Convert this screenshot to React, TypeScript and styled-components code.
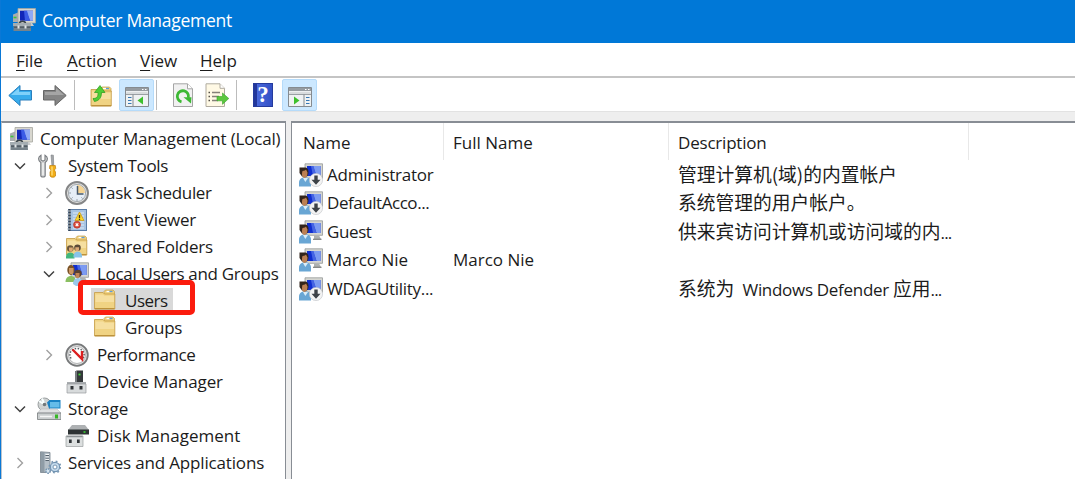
import React from "react";
import styled, { createGlobalStyle } from "styled-components";

const GlobalStyle = createGlobalStyle`
  * { box-sizing: border-box; }
  body { margin: 0; background: #fff; overflow: hidden; }
`;

const Window = styled.div`
  display: flex;
  flex-direction: column;
  width: 1075px;
  height: 479px;
  background: #eee;
  border-left: 1px solid #0a78d6;
  font-family: "Open Sans", "Noto Sans CJK SC", sans-serif;
  font-size: 17px;
  color: #1b1b1b;
  overflow: hidden;
`;
const TitleBar = styled.header`
  display: flex;
  align-items: center;
  gap: 6px;
  height: 43px;
  margin-left: -1px;
  padding: 0 0 3px 12px;
  background: #0078d7;
  color: #fff;
`;
const MenuBar = styled.nav`
  display: flex;
  align-items: center;
  height: 33px;
  padding: 3px 0 0 15px;
  background: #fff;
`;
const MenuItem = styled.span<{ $w: number }>`
  width: ${(p) => p.$w}px;
  white-space: nowrap;
`;
const Mnemonic = styled.span`
  text-decoration: underline;
  text-decoration-thickness: 1px;
  text-underline-offset: 3px;
`;
const ToolBar = styled.div`
  display: flex;
  align-items: center;
  height: 36px;
  padding-left: 6px;
  background: #fff;
  border-top: 2px solid #c4c4c4;
  border-bottom: 1px solid #e2e2e2;
`;
const ToolButton = styled.button<{ $active?: boolean; $gap?: number }>`
  display: grid;
  place-items: center;
  flex: none;
  width: ${(p) => (p.$active ? 35 : 34)}px;
  height: 32px;
  margin: 0 0 0 ${(p) => p.$gap ?? 0}px;
  padding: ${(p) => (p.$active ? "4px 0 0" : "0")};
  border: 1px solid ${(p) => (p.$active ? "#b5dbfa" : "transparent")};
  border-radius: 2px;
  background: ${(p) => (p.$active ? "#cce8ff" : "transparent")};
`;
const ToolDivider = styled.i<{ $gap: number }>`
  flex: none;
  width: 1px;
  height: 30px;
  margin-left: ${(p) => p.$gap}px;
  background: #bcbcbc;
`;
const Body = styled.main`
  display: flex;
  gap: 5px;
  flex: 1;
  min-height: 0;
  padding-top: 9px;
`;
const TreePane = styled.aside`
  width: 285px;
  padding: 2px 0 0 7px;
  background: #fff;
  border: 1px solid #888d94;
  border-top-width: 2px;
  border-left-color: #bcc4cc;
  border-bottom: 0;
`;
const ListPane = styled.section`
  flex: 1;
  background: #fff;
  border: 1px solid #888d94;
  border-top-width: 2px;
  border-right: 0;
  border-bottom: 0;
`;
const TreeRow = styled.div<{ $indent: number }>`
  position: relative;
  display: flex;
  align-items: center;
  height: 27px;
  padding-left: ${(p) => p.$indent}px;
`;
const ChevronSlot = styled.span<{ $w: number }>`
  display: flex;
  flex: none;
  width: ${(p) => p.$w}px;
`;
const Item = styled.span<{ $selected?: boolean; $gap: number }>`
  display: flex;
  flex: none;
  align-items: center;
  gap: ${(p) => p.$gap}px;
  height: 26px;
  margin-left: -2px;
  padding: 0 5px 0 2px;
  background: ${(p) => (p.$selected ? "#d9d9d9" : "transparent")};
`;
const Highlight = styled.span`
  position: absolute;
  z-index: 1;
  left: 69px;
  top: -7px;
  width: 117px;
  height: 35px;
  border: 5px solid #fb1c0e;
  border-radius: 5px;
`;
const Text = styled.span<{ $ls?: number; $size?: number }>`
  letter-spacing: ${(p) => p.$ls ?? 0}px;
  font-size: ${(p) => p.$size ?? 17}px;
  line-height: 24px;
  white-space: pre;
`;
const Cjk = styled.span`
  font-family: "Noto Sans CJK SC", sans-serif;
  font-size: 18.75px;
  line-height: 24px;
  letter-spacing: 0;
`;
const HeaderRow = styled.div`
  display: grid;
  grid-template-columns: 152px 225px 300px;
  height: 37px;
  margin-bottom: 0.5px;
`;
const HeaderCell = styled.div`
  display: flex;
  align-items: center;
  padding: 3px 0 0 9px;
  border-right: 1px solid #e8e8e8;

  &:first-child {
    padding-left: 11px;
  }
`;
const UserRow = styled.div`
  display: grid;
  grid-template-columns: 152px 225px 300px;
  align-items: center;
  height: 28.5px;
`;
const NameCell = styled.div`
  display: flex;
  align-items: center;
  gap: 4px;
  padding-left: 7px;
`;
const Cell = styled.div`
  display: flex;
  align-items: center;
  padding-left: 9px;
`;

const Svg = ({ size = 24, children }: { size?: number; children: React.ReactNode }) => (
  <svg width={size} height={size} viewBox="0 0 24 24" fill="none">{children}</svg>
);

const Chevron = ({ open }: { open?: boolean }) => (
  <svg width="12" height="12" viewBox="0 0 12 12" fill="none">
    {open ? <path d="M1 3.5 6 8.5 11 3.5" stroke="#404040" strokeWidth="1.5" /> : <path d="M3.5 1 8.5 6 3.5 11" stroke="#a0a0a0" strokeWidth="1.4" />}
  </svg>
);

const ComputerIcon = () => (
  <Svg>
    <path d="M1 6.5 6 4.5V14H1z" fill="#a9adb0" />
    <path d="M1.5 9.5h3" stroke="#3fc43a" strokeWidth="1.6" />
    <path d="M6 .5h17.500v14.500H6z" fill="#d8d7cf" stroke="#a6a69f" strokeWidth=".8" />
    <path d="M8 2.7h13v10H8z" fill="#1226b8" />
    <path d="M14 2.7h7v10h-3z" fill="#8fa9f5" />
    <path d="M12 2.7h3l3 10h-5z" fill="#3b5be6" />
    <path d="M11 15h9l2 3h-9z" fill="#c9cbcc" />
    <path d="M7.500 15.500c0-3 6-3 6 0" stroke="#39434b" strokeWidth="1.500" />
    <path d="M1.500 15.500h17L19 23H1.500z" fill="#77838b" />
    <path d="M1 15h18v3H1z" fill="#a4adb2" />
    <path d="M2 19.200h16.500" stroke="#4a555d" strokeWidth="1.200" />
    <path d="M5.500 17.500h2v3h-2zM12.500 17.500h2v3h-2z" fill="#e1e5e7" />
  </Svg>
);

const ToolsIcon = () => (
  <Svg>
    <path d="M4 1.200C.8 3 .8 6.500 3.800 8.500V21.500c0 2 4.400 2 4.400 0V8.500c3-2 3-5.500-.2-7.300V6L6 7.200 4 6z" fill="#d3d4d5" stroke="#777b7f" strokeWidth="1.100" />
    <path d="M6 9v12" stroke="#f8f8f8" strokeWidth="1.200" />
    <path d="m14 1 2.400.2.300 10h-1.800z" fill="#a2a5a9" stroke="#7c7f83" strokeWidth=".6" />
    <path d="M12.800 11.500h5.500l.4 3-1.300 1.500 1.100 2v4c-1 1.700-4.500 1.700-5.500 0v-4l1.200-2-1.700-1.500z" fill="#f2ad16" stroke="#bf7e09" strokeWidth=".7" />
    <path d="M15 12.500v9" stroke="#ffe486" strokeWidth="1.200" />
  </Svg>
);

const ClockIcon = () => (
  <Svg>
    <circle cx="12" cy="12" r="11" fill="#e0e0df" stroke="#858687" strokeWidth="1.900" />
    <circle cx="12" cy="12" r="8.600" fill="#e6eef7" stroke="#a6acb0" />
    <path d="M12 12V4a8 8 0 0 1 8 8z" fill="#f6d493" />
    <path d="M12.500 5v8h6" stroke="#47596c" strokeWidth="1.500" />
    <path d="M12 18.300v1.500M4.300 12h1.500M6.500 6.500l1 1M6.500 17.500l1-1M17.500 17.500l-1-1" stroke="#7c8791" />
  </Svg>
);

const EventIcon = () => (
  <Svg>
    <path d="M3 1h19v22H3z" fill="#5a7ca6" />
    <path d="M6 2h15v20H6z" fill="#a7c4e3" />
    <path d="M8 5h11M8 8h11M8 11h11M8 14h11M8 17h11M8 20h11" stroke="#dfeaf6" />
    <path d="M4.500 1v22" stroke="#38434e" strokeWidth="2" />
    <path d="M2 3h4M2 6h4M2 9h4M2 12h4M2 15h4M2 18h4M2 21h4" stroke="#bfc7cd" strokeWidth="1.200" />
    <path d="m14.500 4 4.500 8.500h-9z" fill="#f9d62d" stroke="#d19a13" strokeWidth=".8" />
    <path d="M14.500 7v3M14.500 10.700v1.200" stroke="#413413" strokeWidth="1.300" />
    <circle cx="12" cy="16.700" r="3.500" fill="#d94c3b" stroke="#a8291d" strokeWidth=".6" />
    <path d="m10.700 15.400 2.600 2.600m0-2.600-2.600 2.600" stroke="#fff" strokeWidth="1.200" />
  </Svg>
);

const FolderShape = () => (
  <>
    <path d="M11 3.500 12.500 2H20l1.500 1.500V7H11z" fill="#efcf7a" stroke="#c39d47" strokeWidth=".7" />
    <path d="M13.500 3.500h3" stroke="#fff" strokeWidth="1.300" />
    <path d="M16.500 3.500h3" stroke="#5d9cdc" strokeWidth="1.300" />
    <path d="M1.500 4.500H10l1.500 1.500h10.300V21H1.500z" fill="#f0d383" stroke="#c49b45" strokeWidth=".8" />
    <path d="M2.500 6.500h7.500l1.500 1.300H21V14H2.500z" fill="#f6dfa0" />
    <path d="M2 20.700h19.500" stroke="#b88c34" strokeWidth="1.100" />
  </>
);
const FolderIcon = () => <Svg><g transform="translate(0 -1)"><FolderShape /></g></Svg>;

const SharedIcon = () => (
  <Svg>
    <g transform="translate(0 -1)"><FolderShape /></g>
    <path d="M1 22c0-6 8.500-6 8.500 0v1.500H1z" fill="#42b67c" />
    <circle cx="5.300" cy="13.500" r="3.300" fill="#6b573c" />
    <path d="M4 12.500h3.800v2c0 3-3.800 3-3.800 0z" fill="#dba874" />
    <path d="M8.500 21c0-6 8.500-6 8.500 0v1.500H8.500z" fill="#88c4e9" />
    <circle cx="12.500" cy="12.800" r="3.300" fill="#5b4937" />
    <path d="M10.300 12.300h3.700v2c0 2.700-3.700 2.700-3.700 0z" fill="#dba874" />
  </Svg>
);

const MonitorShape = () => (
  <>
    <path d="M6 .8h17.500v14.500H6z" fill="#d5d6d2" stroke="#969997" strokeWidth=".8" />
    <path d="M8 3h13.500v10H8z" fill="#102fd0" />
    <path d="M14 3h7.500v10h-4z" fill="#7c9bf1" />
    <path d="M12 3h2.500l3 10H14z" fill="#4564e3" />
    <path d="M15 15.500h5l2 3.500h-7z" fill="#aeb1b0" />
    <path d="M14 19.300h8.500" stroke="#7b7e7d" strokeWidth="1.200" />
  </>
);
const GroupIcon = () => (
  <Svg>
    <MonitorShape />
    <path d="M.5 20c0-8 10.500-8 10.500 0H.5z" fill="#8abf61" />
    <ellipse cx="6" cy="8" rx="3.700" ry="5" fill="#7a5226" />
    <path d="M4 6h4.500v4c0 3-4.500 3-4.500 0z" fill="#cc9663" />
    <path d="M8 22c0-8 10-8 10 0l-3 2h-4z" fill="#9bc9ec" />
    <circle cx="13" cy="11.500" r="3.700" fill="#5a4030" />
    <path d="M10.500 11h4v3c0 3-4 3-4 0z" fill="#c28455" />
  </Svg>
);
const UserIcon = ({ disabled }: { disabled?: boolean }) => (
  <Svg>
    <MonitorShape />
    <path d="M0 23.500v-4c0-7 12-7 12 0v4z" fill="#69a6d4" />
    <path d="m4 15 2.300 4L9 15z" fill="#d9edf9" />
    <path d="M.5 4.500h6c4 1 3.500 7 1.500 9H3L.5 10z" fill="#33251c" />
    <path d="M3.500 8c2 0 3-1 3.500-1.500l1.500 3c0 3-1 5.500-3 5.500-2.500 0-3-4-2-7z" fill="#bc8053" />
    {disabled && (
      <>
        <circle cx="17" cy="17" r="6.600" fill="#f3f3f3" stroke="#bfc3c7" strokeWidth=".6" />
        <path d="M15.300 12.500h3.400v4.200h2.800L17 21.700l-4.500-5h2.800z" fill="#3d4247" />
      </>
    )}
  </Svg>
);

const GaugeIcon = () => (
  <Svg>
    <circle cx="12" cy="12" r="10.800" fill="#e1e2e2" stroke="#77797a" strokeWidth="1.800" />
    <circle cx="12" cy="12" r="8.500" fill="#fff" stroke="#b5b6b7" />
    <path d="M6 15.500C2.500 9 8 5.500 12 5.500s9.500 3.500 6 10" stroke="#585d61" strokeWidth="1.500" strokeDasharray="1.500 1.500" />
    <path d="m7.500 6.500 9.500 9.500V8" stroke="#db2020" strokeWidth="2.400" />
  </Svg>
);

const DeviceIcon = () => (
  <Svg>
    <path d="M10 1.500 12 .5h6v13h-8z" fill="#34383a" />
    <path d="M10 1.500 12 .5V13h-2z" fill="#777c7f" />
    <path d="M13.500 4.500h2" stroke="#42dd38" strokeWidth="1.800" />
    <path d="M2 12h19v2.500H2z" fill="#a9adb0" />
    <path d="M2 14h19v9H2z" fill="#d8dbdc" stroke="#989b9d" strokeWidth=".7" />
    <path d="M5.500 16h3v3.500h-3zM14.500 16h3v3.500h-3z" fill="#303437" />
  </Svg>
);

const StorageIcon = () => (
  <Svg>
    <circle cx="7.500" cy="7.500" r="6.500" fill="#cfd2d2" stroke="#999e9f" />
    <path d="M7.500 7.500 2 4m5.500 3.500L5 1.500" stroke="#f8ffff" strokeWidth="2" />
    <circle cx="7.500" cy="7.500" r="1.800" fill="#70777a" />
    <path d="M10 5.500 12.500 3h11v8.500H12z" fill="#1982c4" />
    <path d="M13 5h9.500v5.500H13z" fill="#65bce9" />
    <path d="M4 12h16l4 4H.5z" fill="#dfe1e2" stroke="#b0b3b4" strokeWidth=".5" />
    <path d="M.5 16H24v6.500H.5z" fill="#c9cdce" stroke="#777c7e" strokeWidth=".8" />
    <path d="M3 19.500h12" stroke="#f4f5f5" strokeWidth="1.500" />
    <path d="M18 17.500h3v4h-3z" fill="#36b726" />
  </Svg>
);

const DiskIcon = () => (
  <Svg>
    <path d="M7 1h13l4 5H3z" fill="#aeb1b3" />
    <path d="M3 5.500h21v5H3z" fill="#2d3233" />
    <path d="M18.500 8h2" stroke="#3ddd33" strokeWidth="1.500" />
    <path d="M1 12h17v10.500H1z" fill="#dcdfdf" stroke="#999d9f" strokeWidth=".7" />
    <path d="M1.500 12.500h16" stroke="#8d9294" strokeWidth="1.500" />
    <path d="M4 15.500h2.700V19H4zM12 15.500h2.700V19H12z" fill="#303437" />
  </Svg>
);

const ServicesIcon = () => (
  <Svg>
    <path d="M3.500.8 13 1.500v20H3.500z" fill="#b5bfc7" stroke="#75808a" strokeWidth=".8" />
    <path d="M4 1h3.500v20H4z" fill="#8f9ca6" />
    <path d="M8.500 4.500H12M8.500 7H12M8.500 9.500H12" stroke="#55616c" strokeWidth="1.100" />
    <path d="M8.500 3.500H12M8.500 6H12M8.500 8.500H12" stroke="#f5f7f8" />
    <circle cx="18" cy="16" r="4.600" fill="#c5dbed" stroke="#7293b1" strokeWidth="1.100" />
    <circle cx="18" cy="16" r="5.600" stroke="#7897b3" strokeWidth="1.800" strokeDasharray="1.800 2.600" />
    <circle cx="18" cy="16" r="2" fill="#fff" stroke="#7897b3" />
    <circle cx="11" cy="20" r="2.200" fill="#d7e6f1" stroke="#7897b3" strokeWidth="1.500" strokeDasharray="1.500 .8" />
  </Svg>
);

const Arrow = ({ back }: { back?: boolean }) => (
  <Svg>
    <path
      d={back ? "M.8 12.500 12 2.500v5h11.500v9.500H12V22.500z" : "M23.200 12.500 12 2.500v5H.5v9.500H12v5.500z"}
      fill={back ? "#38acec" : "#858585"} stroke={back ? "#287fbd" : "#666"} strokeWidth="1" strokeLinejoin="round"
    />
    <path d={back ? "M3 12 11 5v4h11v3z" : "M21 12 13 5v4H2v3z"} fill={back ? "#7fd1fa" : "#a5a5a5"} />
  </Svg>
);

const UpFolderIcon = () => (
  <Svg>
    <g transform="translate(.5 2)"><FolderShape /></g>
    <path d="M4 15.500c5 0 5-3 5-6H5.500L11 2.500l5 7h-3.500c0 5-2 8-7 9z" fill="#4fcd35" stroke="#279b1e" strokeWidth=".7" />
  </Svg>
);

const PaneIcon = ({ right }: { right?: boolean }) => (
  <svg width="24" height="20" viewBox="0 0 24 20" fill="none">
    <path d="M.5.5h23v19H.5z" fill="#eff2f3" stroke="#858b90" />
    <path d="M1 1h22v3H1z" fill="#969ca1" />
    <path d="M1.500 5.500h21" stroke="#d9dcde" strokeWidth="1.200" />
    <path d="M1 7.300h22" stroke="#858b90" />
    <path d="M17 2.500h1.500M20 2.500h1.500" stroke="#fff" />
    {right ? (
      <>
        <path d="M16 7.500V19" stroke="#858b90" />
        <path d="M18 10.500h3.500M18 13.500h3.500M18 16.500h3.500" stroke="#3577b5" strokeWidth="1.200" />
        <path d="M6 9.500v8l5.500-4z" fill="#3dc02d" />
      </>
    ) : (
      <>
        <path d="M8 7.500V19" stroke="#858b90" />
        <path d="M3 10.500h3.500M3 13.500h3.500M3 16.500h3.500" stroke="#3577b5" strokeWidth="1.200" />
        <path d="M18 9.500v8l-5.500-4z" fill="#3dc02d" />
      </>
    )}
  </svg>
);

const RefreshIcon = () => (
  <Svg>
    <path d="M2.500.8h14l5 5V23.500h-19z" fill="#f1f1f1" stroke="#a5a5a5" />
    <path d="M16.500.8v5h5" fill="#fff" stroke="#a5a5a5" />
    <path d="M10.500 18.800a5.600 5.600 0 1 1 6.800-4" stroke="#3db834" strokeWidth="2.800" />
    <path d="M12.500 14.200h8L20 20.500z" fill="#3db834" />
  </Svg>
);

const ExportIcon = () => (
  <Svg>
    <path d="M1 .8h14l4.500 4.500V23.500H1z" fill="#fff9e5" stroke="#b0aba0" />
    <path d="M15 .8v4.500h4.500" fill="#fff" stroke="#b0aba0" />
    <path d="M7 9.500h8M7 13.500h7M7 17.500h6" stroke="#858179" strokeWidth="1.300" />
    <path d="M3.500 9.500H5M3.500 13.500H5M3.500 17.500H5" stroke="#545049" strokeWidth="1.400" />
    <path d="M12 13.500h5.500V10l6.300 5.500-6.300 5.800v-3.500H12z" fill="#5bc73e" stroke="#35a52a" strokeWidth=".6" />
  </Svg>
);

const HelpGlyph = styled.div`
  display: grid;
  place-items: center;
  width: 20px;
  height: 24px;
  background: linear-gradient(90deg, #23379b 3px, #4968db 3px, #3350c5);
  border: 1px solid #253b9d;
  color: #fff;
  font: bold 23px/22px "Liberation Serif", serif;
`;

const TREE: { text: string; level: number; icon: React.ReactNode; open?: boolean; selected?: boolean; ls?: number }[] = [
  { text: "Computer Management (Local)", level: 0, icon: <ComputerIcon />, ls: -0.17 },
  { text: "System Tools", level: 1, icon: <ToolsIcon />, open: true, ls: -0.32 },
  { text: "Task Scheduler", level: 2, icon: <ClockIcon />, open: false, ls: -0.33 },
  { text: "Event Viewer", level: 2, icon: <EventIcon />, open: false, ls: -0.25 },
  { text: "Shared Folders", level: 2, icon: <SharedIcon />, open: false, ls: -0.2 },
  { text: "Local Users and Groups", level: 2, icon: <GroupIcon />, open: true, ls: -0.3 },
  { text: "Users", level: 3, icon: <FolderIcon />, selected: true, ls: -0.5 },
  { text: "Groups", level: 3, icon: <FolderIcon />, ls: -0.2 },
  { text: "Performance", level: 2, icon: <GaugeIcon />, open: false, ls: -0.4 },
  { text: "Device Manager", level: 2, icon: <DeviceIcon />, ls: -0.08 },
  { text: "Storage", level: 1, icon: <StorageIcon />, open: true, ls: -0.1 },
  { text: "Disk Management", level: 2, icon: <DiskIcon /> },
  { text: "Services and Applications", level: 1, icon: <ServicesIcon />, open: false, ls: -0.17 },
];
const INDENT = [0, 5, 34, 84];
const SLOT = [0, 23, 22, 0];
const GAP = [7, 7, 8, 8];

const USERS: { name: string; full?: string; disabled?: boolean; desc?: React.ReactNode; ls?: number }[] = [
  { name: "Administrator", disabled: true, desc: <Cjk>管理计算机(域)的内置帐户</Cjk>, ls: -0.25 },
  { name: "DefaultAcco...", disabled: true, desc: <Cjk>系统管理的用户帐户。</Cjk>, ls: -0.45 },
  { name: "Guest", desc: <><Cjk>供来宾访问计算机或访问域的内</Cjk><Text $ls={-0.8}>...</Text></>, ls: -0.4 },
  { name: "Marco Nie", full: "Marco Nie" },
  { name: "WDAGUtility...", disabled: true, desc: <><Cjk>系统为</Cjk><Text $ls={-0.3}>{"  Windows Defender "}</Text><Cjk>应用</Cjk><Text $ls={-0.8}>...</Text></>, ls: -0.3 },
];

export default function App() {
  return (
    <Window>
      <GlobalStyle />
      <TitleBar>
        <ComputerIcon />
        <Text $size={17.5} $ls={-0.28}>Computer Management</Text>
      </TitleBar>
      <MenuBar>
        {([["File", 51], ["Action", 73], ["View", 60], ["Help", 50]] as [string, number][]).map(([m, w]) => (
          <MenuItem key={m} $w={w}><Text><Mnemonic>{m[0]}</Mnemonic>{m.slice(1)}</Text></MenuItem>
        ))}
      </MenuBar>
      <ToolBar>
        <ToolButton $gap={-4}><Arrow back /></ToolButton>
        <ToolButton $gap={1}><Arrow /></ToolButton>
        <ToolDivider $gap={2} />
        <ToolButton $gap={9}><UpFolderIcon /></ToolButton>
        <ToolButton $gap={1} $active><PaneIcon /></ToolButton>
        <ToolDivider $gap={2} />
        <ToolButton $gap={9}><RefreshIcon /></ToolButton>
        <ToolButton><ExportIcon /></ToolButton>
        <ToolDivider $gap={2} />
        <ToolButton $gap={9}><HelpGlyph>?</HelpGlyph></ToolButton>
        <ToolButton $gap={2} $active><PaneIcon right /></ToolButton>
      </ToolBar>
      <Body>
        <TreePane>
          {TREE.map((n) => (
            <TreeRow key={n.text} $indent={INDENT[n.level]}>
              {SLOT[n.level] > 0 && (
                <ChevronSlot $w={SLOT[n.level]}>{n.open !== undefined && <Chevron open={n.open} />}</ChevronSlot>
              )}
              <Item $selected={n.selected} $gap={GAP[n.level]}>
                {n.icon}
                <Text $ls={n.ls}>{n.text}</Text>
              </Item>
              {n.selected && <Highlight />}
            </TreeRow>
          ))}
        </TreePane>
        <ListPane>
          <HeaderRow>
            <HeaderCell><Text>Name</Text></HeaderCell>
            <HeaderCell><Text>Full Name</Text></HeaderCell>
            <HeaderCell><Text $ls={-0.2}>Description</Text></HeaderCell>
          </HeaderRow>
          {USERS.map((u) => (
            <UserRow key={u.name}>
              <NameCell><UserIcon disabled={u.disabled} /><Text $ls={u.ls}>{u.name}</Text></NameCell>
              <Cell><Text>{u.full}</Text></Cell>
              <Cell><Text>{u.desc}</Text></Cell>
            </UserRow>
          ))}
        </ListPane>
      </Body>
    </Window>
  );
}
